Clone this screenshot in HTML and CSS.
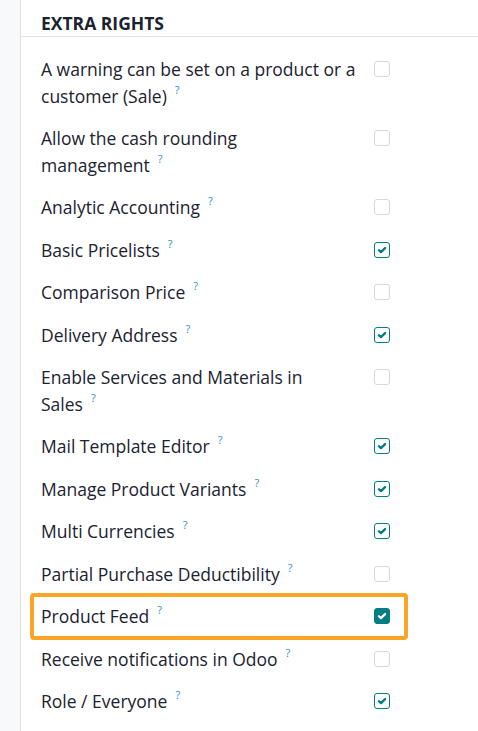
FILE: index.html
```html
<!DOCTYPE html>
<html lang="en">
<head>
    <meta charset="UTF-8">
    <meta name="viewport" content="width=device-width, initial-scale=1.0">
    <title>Extra Rights</title>
    <link rel="stylesheet" href="styles.css">
</head>
<body>
    <div class="page">
        <div class="sidebar"></div>

        <div class="group">
            <h3 class="group-title">Extra Rights</h3>

            <div class="rights">
                <div class="right">
                    <label>A warning can be set on a product or a customer <span class="nowrap">(Sale)<sup>?</sup></span></label>
                    <span class="check"></span>
                </div>
                <div class="right">
                    <label>Allow the cash rounding <span class="nowrap">management<sup>?</sup></span></label>
                    <span class="check"></span>
                </div>
                <div class="right">
                    <label>Analytic <span class="nowrap">Accounting<sup>?</sup></span></label>
                    <span class="check"></span>
                </div>
                <div class="right">
                    <label>Basic <span class="nowrap">Pricelists<sup>?</sup></span></label>
                    <span class="check on"></span>
                </div>
                <div class="right">
                    <label>Comparison <span class="nowrap">Price<sup>?</sup></span></label>
                    <span class="check"></span>
                </div>
                <div class="right">
                    <label>Delivery <span class="nowrap">Address<sup>?</sup></span></label>
                    <span class="check on"></span>
                </div>
                <div class="right">
                    <label>Enable Services and Materials in <span class="nowrap">Sales<sup>?</sup></span></label>
                    <span class="check"></span>
                </div>
                <div class="right">
                    <label>Mail Template <span class="nowrap">Editor<sup>?</sup></span></label>
                    <span class="check on"></span>
                </div>
                <div class="right">
                    <label>Manage Product <span class="nowrap">Variants<sup>?</sup></span></label>
                    <span class="check on"></span>
                </div>
                <div class="right">
                    <label>Multi <span class="nowrap">Currencies<sup>?</sup></span></label>
                    <span class="check on"></span>
                </div>
                <div class="right">
                    <label>Partial Purchase <span class="nowrap">Deductibility<sup>?</sup></span></label>
                    <span class="check"></span>
                </div>
                <div class="right highlighted">
                    <label>Product <span class="nowrap">Feed<sup>?</sup></span></label>
                    <span class="check on focused"></span>
                </div>
                <div class="right">
                    <label>Receive notifications in <span class="nowrap">Odoo<sup>?</sup></span></label>
                    <span class="check"></span>
                </div>
                <div class="right">
                    <label>Role / <span class="nowrap">Everyone<sup>?</sup></span></label>
                    <span class="check on"></span>
                </div>
            </div>
        </div>
    </div>
</body>
</html>
```

FILE: styles.css
```css
body {
    margin: 0;
    font-family: "Open Sans", "Noto Sans", sans-serif;
    color: #1b2230;
    background: #fff;
}

.page {
    display: flex;
    min-height: 731px;
}

.sidebar {
    width: 20px;
    flex-shrink: 0;
    background: #f8f9fb;
    border-right: 1px solid #dcdfe3;
}

.group {
    flex: 1;
}

.group-title {
    margin: 0;
    padding: 15px 0 4px 20px;
    font-size: 17.5px;
    line-height: 17px;
    font-weight: 700;
    text-transform: uppercase;
    border-bottom: 1px solid #e3e5e8;
}

.rights {
    padding: 11px 0 0 20px;
}

.right {
    position: relative;
    display: grid;
    grid-template-columns: 316px 16px;
    column-gap: 17px;
    align-items: start;
    padding: 8px 0;
    width: 349px;
}

.right label {
    font-size: 17.5px;
    line-height: 26.5px;
}

.nowrap {
    white-space: nowrap;
}

sup {
    display: inline-block;
    margin-left: 8px;
    font-size: 11px;
    line-height: 11px;
    color: #2a8fc7;
    vertical-align: 9px;
}

.check {
    width: 16px;
    height: 16px;
    margin-top: 5px;
    box-sizing: border-box;
    border: 1px solid #d6d8dc;
    border-radius: 3px;
    background: #fff;
}

.check.on {
    border: 1.5px solid #017e84;
    background: #fff url("data:image/svg+xml,%3Csvg xmlns='http://www.w3.org/2000/svg' viewBox='0 0 16 16'%3E%3Cpath d='M4.5 8.3l2.3 2.1 4.7-4.6' fill='none' stroke='%23017e84' stroke-width='2.6' stroke-linecap='round' stroke-linejoin='round'/%3E%3C/svg%3E") center / 14px no-repeat;
}

.check.on.focused {
    background-color: #017e84;
    background-image: url("data:image/svg+xml,%3Csvg xmlns='http://www.w3.org/2000/svg' viewBox='0 0 16 16'%3E%3Cpath d='M4.5 8.3l2.3 2.1 4.7-4.6' fill='none' stroke='%23fff' stroke-width='2.6' stroke-linecap='round' stroke-linejoin='round'/%3E%3C/svg%3E");
}

/* orange frame drawn over the selected right */
.highlighted::after {
    content: "";
    position: absolute;
    top: -2px;
    bottom: -2px;
    left: -11px;
    right: -18px;
    border: 4px solid #faa526;
    border-radius: 4px;
    pointer-events: none;
}
```
